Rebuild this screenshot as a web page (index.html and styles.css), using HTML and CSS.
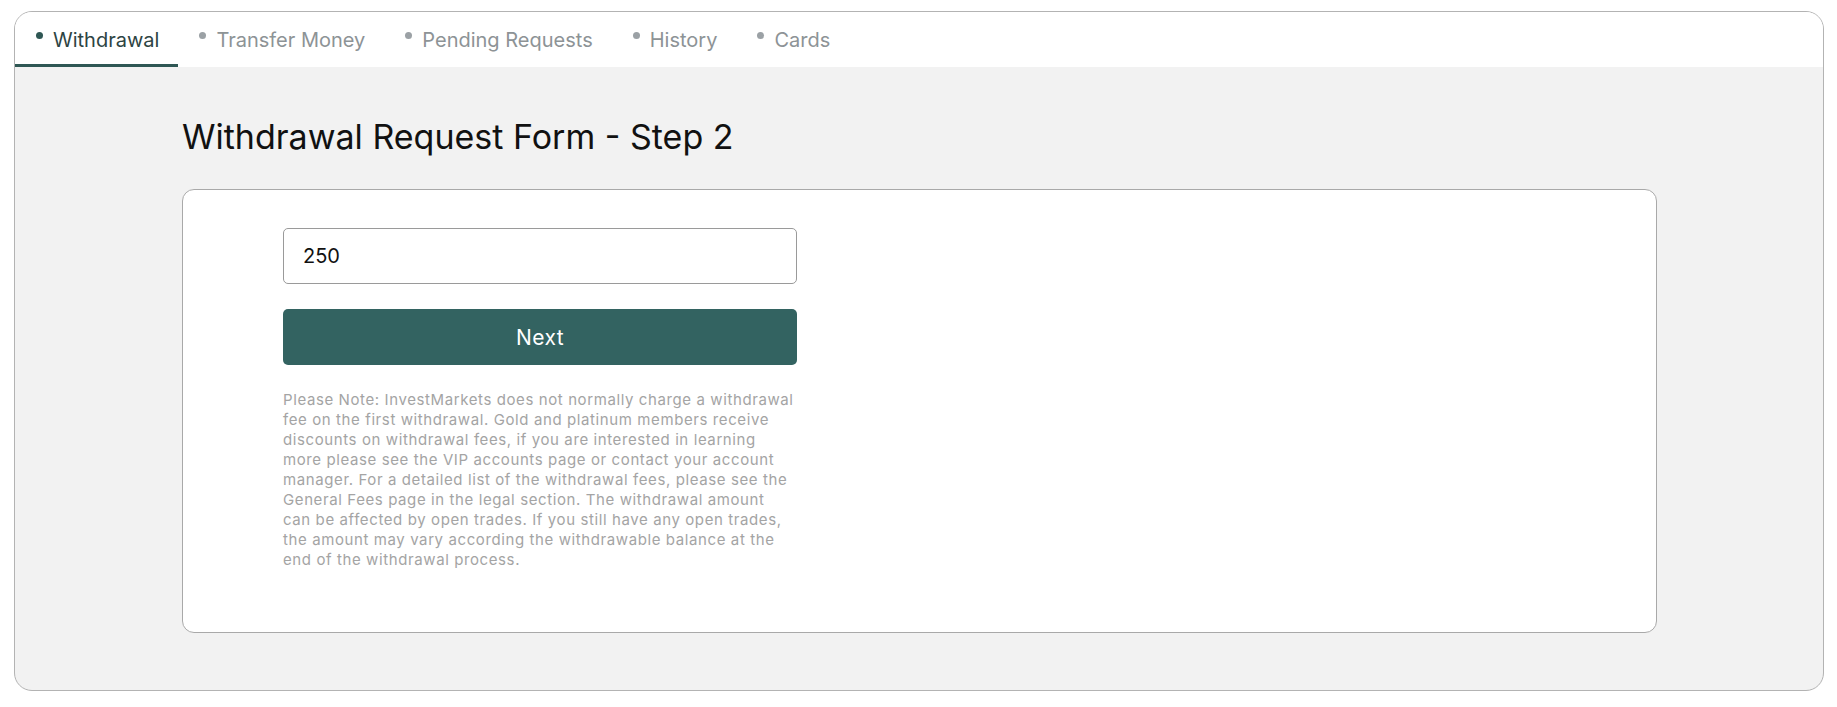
FILE: index.html
```html
<!DOCTYPE html>
<html lang="en">
<head>
<meta charset="utf-8">
<title>Withdrawal Request Form - Step 2</title>
<link rel="stylesheet" href="styles.css">
</head>
<body>
<div class="frame">
  <nav class="tabs">
    <a class="tab active"><span class="dot"></span>Withdrawal</a>
    <a class="tab"><span class="dot"></span>Transfer Money</a>
    <a class="tab"><span class="dot"></span>Pending Requests</a>
    <a class="tab"><span class="dot"></span>History</a>
    <a class="tab"><span class="dot"></span>Cards</a>
  </nav>
  <main class="content">
    <h1 class="title">Withdrawal Request Form - Step 2</h1>
    <section class="card">
      <form class="form">
        <input class="amount" type="text" value="250">
        <button class="next" type="button">Next</button>
        <p class="note">Please Note: InvestMarkets does not normally charge a withdrawal fee on the first withdrawal. Gold and platinum members receive discounts on withdrawal fees, if you are interested in learning more please see the VIP accounts page or contact your account manager. For a detailed list of the withdrawal fees, please see the General Fees page in the legal section. The withdrawal amount can be affected by open trades. If you still have any open trades, the amount may vary according the withdrawable balance at the end of the withdrawal process.</p>
      </form>
    </section>
  </main>
</div>
</body>
</html>
```

FILE: styles.css
```css
* { box-sizing: border-box; }

html, body {
  margin: 0;
  background: #ffffff;
}

body {
  padding: 11px 13px 16px 14px;
  font-family: Inter, "Noto Sans", "Liberation Sans", sans-serif;
}

.frame {
  border: 1px solid #b3b3b3;
  border-radius: 18px;
  overflow: hidden;
  background: #f2f2f2;
  height: 680px;
  display: flex;
  flex-direction: column;
}

.tabs {
  display: flex;
  background: #ffffff;
  height: 55px;
  flex: none;
}

.tab {
  display: flex;
  align-items: center;
  gap: 10px;
  padding: 3px 19px 0 21px;
  font-size: 20px;
  color: #8d9396;
  border-bottom: 3px solid transparent;
  cursor: pointer;
}

.tab .dot {
  width: 7px;
  height: 7px;
  border-radius: 50%;
  background: #9ba1a5;
  margin-top: -8px;
}

.tab.active {
  color: #2d4443;
  border-bottom-color: #2f5754;
}

.tab.active .dot {
  background: #2f5754;
}

.content {
  flex: 1;
  padding: 0 166px 56px 167px;
}

.title {
  margin: 49px 0 31px;
  font-size: 34px;
  line-height: 42px;
  font-weight: 400;
  color: #111111;
}

.card {
  background: #ffffff;
  border: 1px solid #a9a9a9;
  border-radius: 12px;
  padding: 38px 100px 62px;
}

.form {
  width: 514px;
  display: flex;
  flex-direction: column;
}

.amount {
  height: 56px;
  border: 1px solid #9a9a9a;
  border-radius: 5px;
  padding: 0 19px;
  font-family: inherit;
  font-size: 20px;
  color: #111111;
  outline: none;
}

.next {
  margin-top: 25px;
  height: 56px;
  border: none;
  border-radius: 5px;
  background: #336361;
  color: #ffffff;
  font-family: inherit;
  font-size: 21px;
  letter-spacing: 0.4px;
  cursor: pointer;
}

.note {
  margin: 25px 0 0;
  font-size: 15px;
  letter-spacing: 0.6px;
  line-height: 20px;
  color: #a4a4a4;
}
```
